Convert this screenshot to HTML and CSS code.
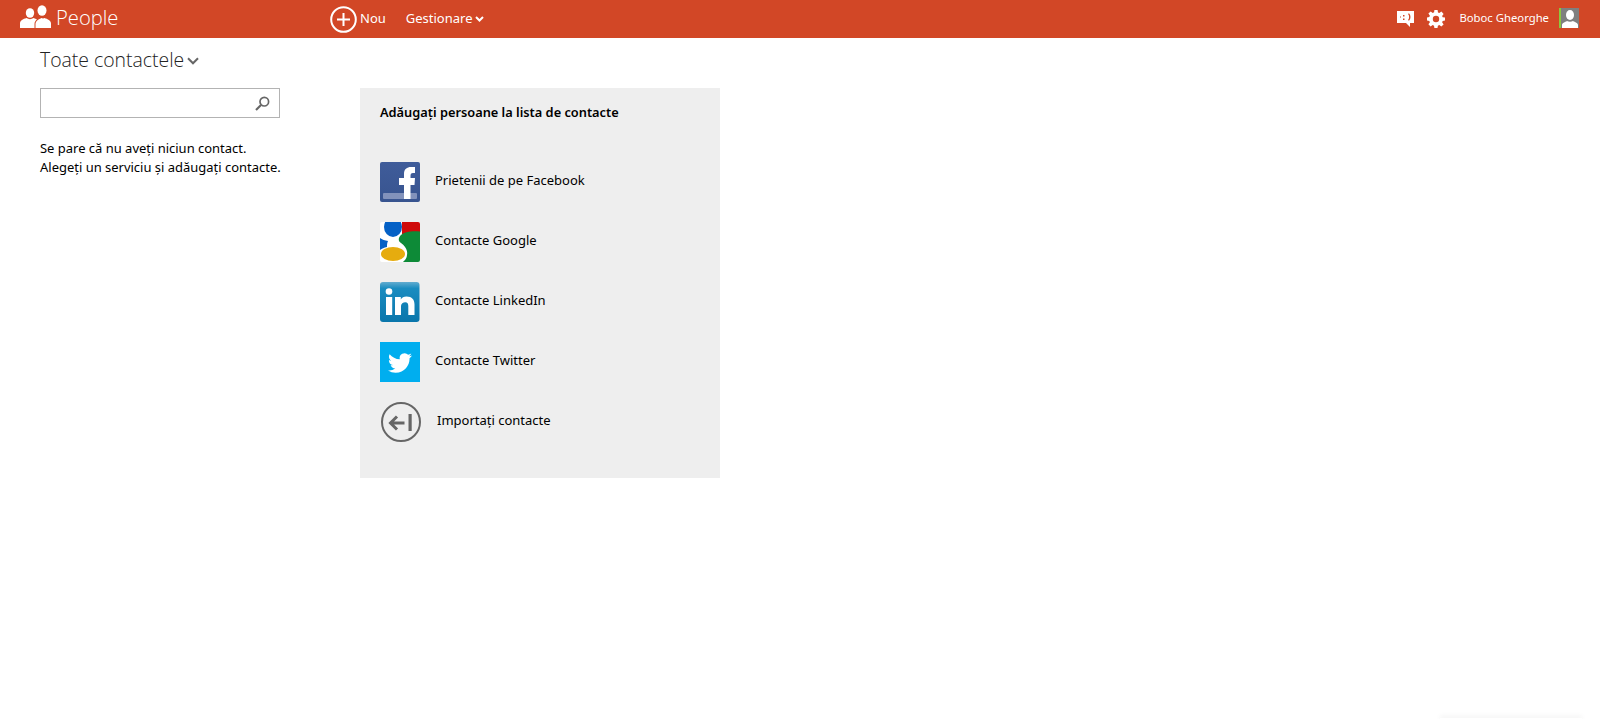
FILE: index.html
```html
<!DOCTYPE html>
<html lang="ro">
<head>
<meta charset="utf-8">
<title>People</title>
<link rel="stylesheet" href="styles.css">
</head>
<body>
<header class="topbar">
  <div class="brand">
    <svg class="brand-icon" width="31" height="23" viewBox="0 0 31 23"><ellipse cx="10" cy="8" rx="4.200" ry="4.800" fill="#fff"/><path d="M0 23v-4.500c0-3 3-4.500 6.500-5.500 2 1.500 5 1.500 7 0 1.500.4 2.500.9 3.500 1.500-1.500 1-2.500 2.500-2.500 4.500v4z" fill="#fff"/><ellipse cx="22" cy="5.500" rx="4.500" ry="5.200" fill="#fff"/><path d="M15.500 23v-4c0-3 3.500-5 6-6 .8.600 2.200.600 3 0 3 1 6.500 2.500 6.500 5.500v4.500z" fill="#fff"/></svg>
    <span class="brand-name">People</span>
  </div>
  <nav class="nav">
    <a class="nav-new">
      <svg width="27" height="27" viewBox="0 0 27 27"><circle cx="13.500" cy="13.500" r="12.300" fill="none" stroke="#fff" stroke-width="2"/><path d="M13.500 7v13M7 13.500h13" stroke="#fff" stroke-width="2" fill="none"/></svg>
      <span class="nav-label">Nou</span>
    </a>
    <a class="nav-manage">
      <span class="nav-label">Gestionare</span>
      <svg width="9" height="6" viewBox="0 0 9 6"><path d="M1 1l3.500 3.500L8 1" fill="none" stroke="#fff" stroke-width="2"/></svg>
    </a>
  </nav>
  <div class="user">
    <svg class="feedback" width="17" height="16" viewBox="0 0 17 16"><path fill-rule="evenodd" d="M0 0h17v12h-4v4l-4-4H0zM6 4v1.500h1.500V4zM6 7.500V9h1.500V7.500zM4 5.500v1H3v-1zM11 3c1.500 1.500 1.500 4.500 0 6l1 .8c2-2 2-5.500 0-7.600z" fill="#fff"/></svg>
    <svg class="gear" width="18" height="18" viewBox="0 0 18 18"><path fill-rule="evenodd" d="M7.400 0h3.200l.4 2.500 1.300.6 2.100-1.500 2.200 2.300-1.500 2 .6 1.400L18 7.400v3.200l-2.300.4-.6 1.300 1.500 2.100-2.300 2.200-2-1.500-1.400.6-.4 2.300H7.400L7 15.700l-1.300-.6-2.100 1.500-2.200-2.300 1.500-2-.6-1.400L0 10.600V7.400l2.300-.4.600-1.300-1.500-2.100 2.300-2.200 2 1.500 1.400-.6zM9 5.800a3.200 3.200 0 1 0 0 6.400 3.200 3.200 0 0 0 0-6.400z" fill="#fff"/></svg>
    <span class="user-name">Boboc Gheorghe</span>
    <svg class="avatar" width="20" height="20" viewBox="0 0 20 20"><rect width="20" height="20" fill="#7f7f7f"/><rect width="2" height="20" fill="#8dc63f"/><ellipse cx="11" cy="7" rx="4" ry="5" fill="#fff"/><path d="M3 20v-3c0-2 3-3 5-4 1.500 1 4.500 1 6 0 2 1 5 2 5 4v3z" fill="#fff"/></svg>
  </div>
</header>

<main class="page">
  <h1 class="title">
    <span>Toate contactele</span>
    <svg width="12" height="8" viewBox="0 0 12 8"><path d="M1 1.300l5 5 5-5" fill="none" stroke="#666" stroke-width="2"/></svg>
  </h1>
  <div class="columns">
    <section class="side">
      <div class="search">
        <svg width="15" height="15" viewBox="0 0 15 15"><circle cx="9.300" cy="5.700" r="4.300" fill="none" stroke="#666" stroke-width="1.700"/><path d="M6 9l-5 5" stroke="#666" stroke-width="2.200" fill="none"/></svg>
      </div>
      <p class="empty">Se pare că nu aveți niciun contact.<br>Alegeți un serviciu și adăugați contacte.</p>
    </section>
    <section class="panel">
      <h2 class="panel-title">Adăugați persoane la lista de contacte</h2>
      <ul class="services">
        <li class="service">
          <svg class="logo" width="40" height="40" viewBox="0 0 40 40"><defs><linearGradient id="fb" x1="0" y1="0" x2="0" y2="1"><stop offset="0" stop-color="#3f5c9a"/><stop offset="1" stop-color="#38548f"/></linearGradient></defs><rect width="40" height="40" rx="2" fill="url(#fb)"/><rect x="3" y="31" width="34" height="6" rx="1" fill="#8292bb"/><path d="M24 37V23h-5v-7h5v-4c0-5 3-7 7-7h4v6h-2c-2 0-2.500 1-2.500 3v2H35l-.5 7h-4v14z" fill="#fff"/></svg>
          <span>Prietenii de pe Facebook</span>
        </li>
        <li class="service">
          <svg class="logo" width="40" height="40" viewBox="0 0 40 40"><defs><clipPath id="gc"><rect width="40" height="40" rx="2"/></clipPath></defs><g clip-path="url(#gc)"><rect width="40" height="40" fill="#fff"/><rect x="22" width="18" height="12" fill="#cf0a0a"/><path d="M40 9.500C32 8.500 24 10 21 13c-3 3-3 6 0 8 4 3 7 7 6 12 0 3-2 5-4 7h17z" fill="#0d8a37"/><path d="M0 16c2 1.500 5 2.500 8 3-1 2-1 4-1 6-3 .5-5 1.500-7 3z" fill="#0561c6"/><ellipse cx="13" cy="5" rx="9" ry="10" fill="#0561c6"/><ellipse cx="13" cy="32" rx="12" ry="7" fill="#e6ac0f"/></g></svg>
          <span>Contacte Google</span>
        </li>
        <li class="service">
          <svg class="logo" width="40" height="40" viewBox="0 0 40 40"><defs><linearGradient id="li" x1="0" y1="0" x2="0" y2="1"><stop offset="0" stop-color="#62acd0"/><stop offset=".16" stop-color="#1a8cc0"/><stop offset="1" stop-color="#0a76ab"/></linearGradient></defs><rect width="39.500" height="40" rx="3" fill="url(#li)"/><circle cx="9" cy="9.500" r="3.300" fill="#fff"/><rect x="6" y="15" width="6.200" height="18" fill="#fff"/><path d="M15 15h5.800v2.500c1-2 3-3 5.700-3 5.500 0 8 3 8 8V33h-6.200v-9c0-2-.8-3.700-3-3.700s-4.300 1.700-4.300 3.700v9H15z" fill="#fff"/></svg>
          <span>Contacte LinkedIn</span>
        </li>
        <li class="service">
          <svg class="logo" width="40" height="40" viewBox="0 0 40 40"><rect width="40" height="40" fill="#00aeef"/><g transform="translate(8 9)"><path d="M23.953 4.570a10 10 0 0 1-2.825.775 4.958 4.958 0 0 0 2.163-2.723c-.951.555-2.005.959-3.127 1.184a4.920 4.920 0 0 0-8.384 4.482C7.690 8.095 4.067 6.130 1.640 3.162a4.822 4.822 0 0 0-.666 2.475c0 1.710.870 3.213 2.188 4.096a4.904 4.904 0 0 1-2.228-.616v.060a4.923 4.923 0 0 0 3.946 4.827 4.996 4.996 0 0 1-2.212.085 4.936 4.936 0 0 0 4.604 3.417 9.867 9.867 0 0 1-6.102 2.105c-.390 0-.779-.023-1.170-.067a13.995 13.995 0 0 0 7.557 2.209c9.053 0 13.998-7.496 13.998-13.985 0-.210 0-.420-.015-.630A9.935 9.935 0 0 0 24 4.590z" fill="#fff"/></g></svg>
          <span>Contacte Twitter</span>
        </li>
        <li class="service service-import">
          <svg class="logo" width="41" height="40" viewBox="0 0 41 40"><circle cx="21" cy="20" r="19" fill="none" stroke="#666" stroke-width="2"/><path d="M10 21h14.500M17 14.500L10.500 21l6.500 6.500" fill="none" stroke="#666" stroke-width="3"/><rect x="28.500" y="12" width="3.200" height="17" fill="#666"/></svg>
          <span>Importați contacte</span>
        </li>
      </ul>
    </section>
  </div>
</main>
<div class="toast-edge"></div>
</body>
</html>
```
FILE: styles.css
```css
html, body {
  margin: 0;
  padding: 0;
  height: 100%;
  background: #fff;
  overflow: hidden;
}
body {
  font-family: "Noto Sans", "Open Sans", sans-serif;
  font-size: 13px;
  color: #000;
}
a { color: inherit; }
.topbar {
  display: flex;
  align-items: center;
  height: 38px;
  background: #d24726;
  color: #fff;
}
.brand {
  display: flex;
  align-items: center;
  width: 330px;
  padding-left: 20px;
  box-sizing: border-box;
  flex: none;
}
.brand-icon { margin-top: -6px; }
.brand-name {
  margin-left: 5px;
  padding-bottom: 4px;
  font-family: "Open Sans", sans-serif;
  font-weight: 300;
  font-size: 20.2px;
}
.nav {
  display: flex;
  align-items: center;
  gap: 20px;
}
.nav-new, .nav-manage {
  display: flex;
  align-items: center;
  gap: 3px;
}
.nav-label {
  padding-bottom: 2px;
}
.nav-manage svg { margin-top: -1px; }
.user {
  display: flex;
  align-items: center;
  margin-left: auto;
  margin-right: 21px;
}
.feedback { margin-top: -1px; }
.gear { margin-left: 13px; margin-top: -1px; }
.user-name {
  margin-left: 14px;
  padding-bottom: 3px;
  font-size: 11.3px;
}
.avatar { margin-left: 10px; margin-top: -2px; }
.page { padding-left: 40px; }
.title {
  display: flex;
  align-items: center;
  gap: 3px;
  height: 42px;
  margin: 0;
  font-family: "Open Sans", sans-serif;
  font-weight: 300;
  font-size: 19.4px;
  color: #222;
}
.title svg { margin-top: 4px; }
.columns {
  display: flex;
  gap: 80px;
  margin-top: 8px;
}
.side { width: 240px; flex: none; }
.search {
  display: flex;
  align-items: center;
  justify-content: flex-end;
  height: 30px;
  box-sizing: border-box;
  padding-right: 9px;
  border: 1px solid #b3b3b3;
}
.empty {
  margin: 21px 0 0;
  line-height: 19px;
  white-space: nowrap;
  font-size: 12.97px;
}
.panel {
  width: 360px;
  height: 390px;
  box-sizing: border-box;
  padding: 15px 20px;
  background: #eee;
  flex: none;
}
.panel-title {
  margin: 0;
  font-size: 12.8px;
  font-weight: 600;
  line-height: 19px;
}
.services {
  list-style: none;
  margin: 40px 0 0;
  padding: 0;
  display: flex;
  flex-direction: column;
  gap: 20px;
}
.service {
  display: flex;
  align-items: flex-start;
  gap: 15px;
  height: 40px;
  line-height: 36px;
}
.logo { flex: none; }
.service-import { gap: 16px; }
.toast-edge {
  position: fixed;
  left: 1440px;
  bottom: 0;
  width: 142px;
  height: 1px;
  background: #fff;
  box-shadow: 0 -1px 5px rgba(0,0,0,.18);
}
```
